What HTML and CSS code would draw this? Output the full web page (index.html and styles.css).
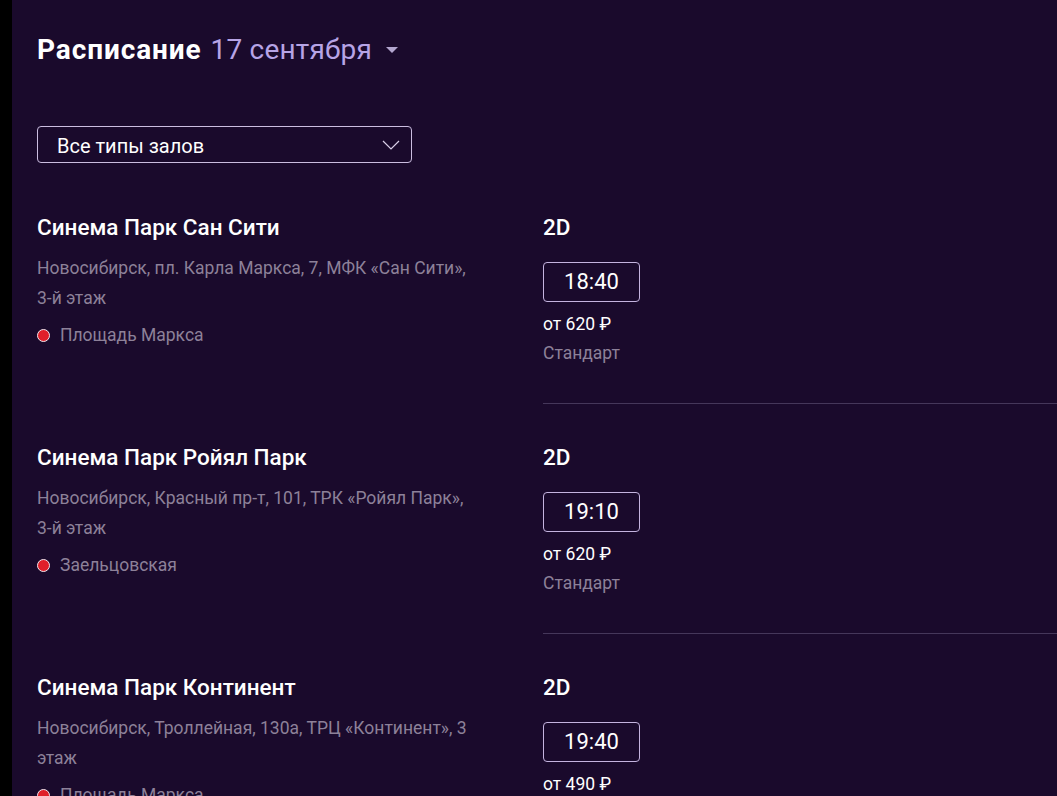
FILE: index.html
```html
<!DOCTYPE html>
<html lang="ru">
<head>
<meta charset="utf-8">
<title>Расписание</title>
<link rel="stylesheet" href="styles.css">
</head>
<body>
<main class="page">
  <h1 class="title"><span class="title-main">Расписание</span><span class="date">17 сентября</span>
    <svg class="caret" width="12" height="6" viewBox="0 0 12 6"><path d="M0 0H12L6 6Z" fill="#b3a6cf"/></svg>
  </h1>

  <div class="select">
    <span>Все типы залов</span>
    <svg class="chevron" width="18" height="10" viewBox="0 0 18 10"><path d="M1 1L9 9L17 1" fill="none" stroke="#d9cfe8" stroke-width="1.2"/></svg>
  </div>

  <section class="cinema">
    <div class="info">
      <div class="name">Синема Парк Сан Сити</div>
      <div class="address">Новосибирск, пл. Карла Маркса, 7, МФК «Сан Сити», <span class="nw">3-й</span> этаж</div>
      <div class="metro"><span class="dot"></span>Площадь Маркса</div>
    </div>
    <div class="sessions">
      <div class="format">2D</div>
      <div class="time">18:40</div>
      <div class="price">от 620 ₽</div>
      <div class="hall">Стандарт</div>
    </div>
  </section>

  <section class="cinema">
    <div class="info">
      <div class="name">Синема Парк Ройял Парк</div>
      <div class="address">Новосибирск, Красный пр-т, 101, ТРК «Ройял Парк», <span class="nw">3-й</span> этаж</div>
      <div class="metro"><span class="dot"></span>Заельцовская</div>
    </div>
    <div class="sessions">
      <div class="format">2D</div>
      <div class="time">19:10</div>
      <div class="price">от 620 ₽</div>
      <div class="hall">Стандарт</div>
    </div>
  </section>

  <section class="cinema">
    <div class="info">
      <div class="name">Синема Парк Континент</div>
      <div class="address">Новосибирск, Троллейная, 130а, ТРЦ «Континент», 3 этаж</div>
      <div class="metro"><span class="dot"></span>Площадь Маркса</div>
    </div>
    <div class="sessions">
      <div class="format">2D</div>
      <div class="time">19:40</div>
      <div class="price">от 490 ₽</div>
      <div class="hall">Стандарт</div>
    </div>
  </section>
</main>
</body>
</html>
```

FILE: styles.css
```css
html, body {
  margin: 0;
  padding: 0;
  background: #000;
  height: 100%;
  overflow: hidden;
}

.page {
  margin-left: 12px;
  min-height: 100%;
  background: #1a0a2c;
  padding: 32px 0 0 25px;
  box-sizing: border-box;
  font-family: Roboto, "Liberation Sans", sans-serif;
  color: #fff;
}

.title {
  margin: 0;
  font-size: 28px;
  line-height: 36px;
  font-weight: 700;
  display: flex;
  align-items: center;
}

.title-main {
  letter-spacing: 0.9px;
}

.date {
  margin-left: 9px;
  font-weight: 400;
  color: #b7a4e6;
  letter-spacing: 0.2px;
}

.caret {
  margin-left: 14px;
}

.select {
  margin-top: 58px;
  width: 375px;
  height: 37px;
  box-sizing: border-box;
  border: 1px solid #cbbde0;
  border-radius: 4px;
  display: flex;
  align-items: center;
  justify-content: space-between;
  padding: 2px 11px 0 19px;
  font-size: 20px;
}

.chevron {
  margin-top: -2px;
}

.cinema {
  display: flex;
  margin-top: 49px;
}

.cinema + .cinema {
  margin-top: 38px;
}

.info {
  width: 506px;
  flex: none;
}

.name, .format {
  font-size: 22.5px;
  line-height: 30px;
  font-weight: 500;
}

.address {
  margin-top: 11px;
  max-width: 436px;
  font-size: 17.5px;
  line-height: 30px;
  color: #8d8199;
}

.nw {
  white-space: nowrap;
}

.metro {
  margin-top: 10px;
  font-size: 17.5px;
  line-height: 24px;
  color: #8d8199;
  display: flex;
  align-items: center;
}

.dot {
  width: 11px;
  height: 11px;
  border-radius: 50%;
  background: #e0202a;
  border: 1px solid #f1e6ee;
  margin-right: 10px;
}

.sessions {
  flex: 1;
  border-bottom: 1px solid #45375a;
  padding-bottom: 38px;
}

.time {
  margin-top: 20px;
  width: 97px;
  height: 40px;
  box-sizing: border-box;
  border: 1px solid #c4b4df;
  border-radius: 4px;
  display: flex;
  align-items: center;
  justify-content: center;
  font-size: 22px;
  padding-bottom: 1px;
}

.price {
  margin-top: 10px;
  font-size: 17.5px;
  line-height: 24px;
}

.hall {
  margin-top: 5px;
  font-size: 17.5px;
  line-height: 24px;
  color: #8d8199;
}
```
